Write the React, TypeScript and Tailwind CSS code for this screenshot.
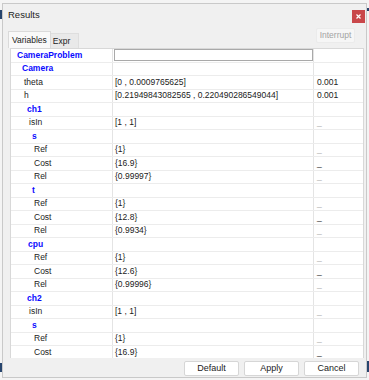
import React from 'react';

type Row = {
  label: string;
  pad: string;
  head?: boolean;
  value?: string;
  extra?: string;
  dash?: 'light' | 'dark';
  input?: boolean;
};

const rows: Row[] = [
  { label: 'CameraProblem', pad: 'pl-[6px]', head: true, input: true },
  { label: 'Camera', pad: 'pl-[11px]', head: true },
  { label: 'theta', pad: 'pl-[13px]', value: '[0 , 0.0009765625]', extra: '0.001' },
  { label: 'h', pad: 'pl-[13px]', value: '[0.21949843082565 , 0.220490286549044]', extra: '0.001' },
  { label: 'ch1', pad: 'pl-[16px]', head: true },
  { label: 'isIn', pad: 'pl-[18px]', value: '[1 , 1]', dash: 'light' },
  { label: 's', pad: 'pl-[21px]', head: true },
  { label: 'Ref', pad: 'pl-[23px]', value: '{1}', dash: 'light' },
  { label: 'Cost', pad: 'pl-[23px]', value: '{16.9}', dash: 'dark' },
  { label: 'Rel', pad: 'pl-[23px]', value: '{0.99997}', dash: 'light' },
  { label: 't', pad: 'pl-[21px]', head: true },
  { label: 'Ref', pad: 'pl-[23px]', value: '{1}', dash: 'light' },
  { label: 'Cost', pad: 'pl-[23px]', value: '{12.8}', dash: 'dark' },
  { label: 'Rel', pad: 'pl-[23px]', value: '{0.9934}', dash: 'light' },
  { label: 'cpu', pad: 'pl-[17px]', head: true },
  { label: 'Ref', pad: 'pl-[23px]', value: '{1}', dash: 'light' },
  { label: 'Cost', pad: 'pl-[23px]', value: '{12.6}', dash: 'dark' },
  { label: 'Rel', pad: 'pl-[23px]', value: '{0.99996}', dash: 'light' },
  { label: 'ch2', pad: 'pl-[16px]', head: true },
  { label: 'isIn', pad: 'pl-[18px]', value: '[1 , 1]', dash: 'light' },
  { label: 's', pad: 'pl-[21px]', head: true },
  { label: 'Ref', pad: 'pl-[23px]', value: '{1}', dash: 'light' },
  { label: 'Cost', pad: 'pl-[23px]', value: '{16.9}', dash: 'dark' },
];

export default function App() {
  return (
    <div className="relative w-[369px] h-[380px] overflow-hidden bg-[#f4f4f4] font-['Liberation_Sans',Arial,sans-serif] text-[8.5px] text-[#1b1b1b]">
      {/* desktop bits peeking out behind the window */}
      <div className="absolute left-0 top-[10px] w-[2px] h-[9px] bg-[#27456e]" />
      <div className="absolute right-0 top-[8px] w-[3px] h-[3px] bg-[#27456e]" />
      <div className="absolute right-0 top-[361px] w-[3px] h-[11px] bg-[#27456e]" />
      <div className="absolute left-0 top-[363px] w-[2px] h-[9px] bg-[#27456e]" />

      <div className="relative ml-[2px] mt-[3px] w-[365px] h-[375px] flex flex-col bg-[#f0f0f0] border border-[#c9c9c9]">
        {/* title bar */}
        <div className="h-[23px] shrink-0 flex items-center justify-between">
          <span className="pl-[5px] text-[9.5px] text-[#222]">Results</span>
          <button className="mr-[1px] mt-[2px] w-[13px] h-[13px] bg-[#c9474a] flex items-center justify-center">
            <svg width="5" height="5" viewBox="0 0 5 5">
              <path d="M0.5 0.5 L4.5 4.5 M4.5 0.5 L0.5 4.5" stroke="#fff" strokeWidth="1.2" />
            </svg>
          </button>
        </div>

        {/* tabs */}
        <div className="h-[21px] shrink-0 flex items-end justify-between">
          <div className="flex items-end ml-[5px]">
            <div className="h-[17px] px-[3px] flex items-center bg-[#f9f9f9] border-t border-l border-r border-[#dadada] text-[#222]">
              Variables
            </div>
            <div className="h-[15px] w-[28px] pl-[2px] flex items-center bg-[#e9e9e9] border-t border-r border-[#dedede] text-[#222]">
              Expr
            </div>
          </div>
          <div className="self-start mt-[1px] mr-[11px] h-[15px] w-[39px] flex items-center justify-center bg-[#f6f6f6] border border-[#ebebeb] rounded-[2px] text-[#a3a3a3]">
            Interrupt
          </div>
        </div>

        {/* property grid */}
        <div className="ml-[7px] mr-[2px] h-[310px] shrink-0 overflow-hidden bg-white border-t border-l border-r border-[#d8d8d8]">
          {rows.map((r, i) => (
            <div key={i} className="flex h-[13.5px] border-b border-[#ececec]">
              <div
                className={`w-[102px] shrink-0 flex items-center border-r border-[#e4e4e4] ${r.pad} ${
                  r.head ? 'font-bold text-[#0a0aff]' : 'text-[#1b1b1b]'
                }`}
              >
                {r.label}
              </div>
              <div className="w-[201px] shrink-0 flex items-center pl-[2px] border-r border-[#e4e4e4] whitespace-nowrap overflow-hidden">
                {r.input ? (
                  <div className="self-start ml-[-1px] h-[12px] w-[199px] bg-white border border-[#a9a9a9]" />
                ) : (
                  r.value
                )}
              </div>
              <div className="flex-1 flex items-center pl-[3px]">
                {r.extra}
                {r.dash && (
                  <span className={r.dash === 'dark' ? 'text-[#3a3a3a]' : 'text-[#b4b4b4]'}>_</span>
                )}
              </div>
            </div>
          ))}
        </div>

        {/* buttons */}
        <div className="flex-1 flex items-start justify-end gap-[5px] pr-[7px] pt-[3px]">
          <button className="h-[15px] w-[55px] bg-white border border-[#d6d6d6] rounded-[2px] text-[9px] text-[#222]">Default</button>
          <button className="h-[15px] w-[55px] bg-white border border-[#d6d6d6] rounded-[2px] text-[9px] text-[#222]">Apply</button>
          <button className="h-[15px] w-[55px] bg-white border border-[#d6d6d6] rounded-[2px] text-[9px] text-[#222]">Cancel</button>
        </div>
      </div>
    </div>
  );
}
